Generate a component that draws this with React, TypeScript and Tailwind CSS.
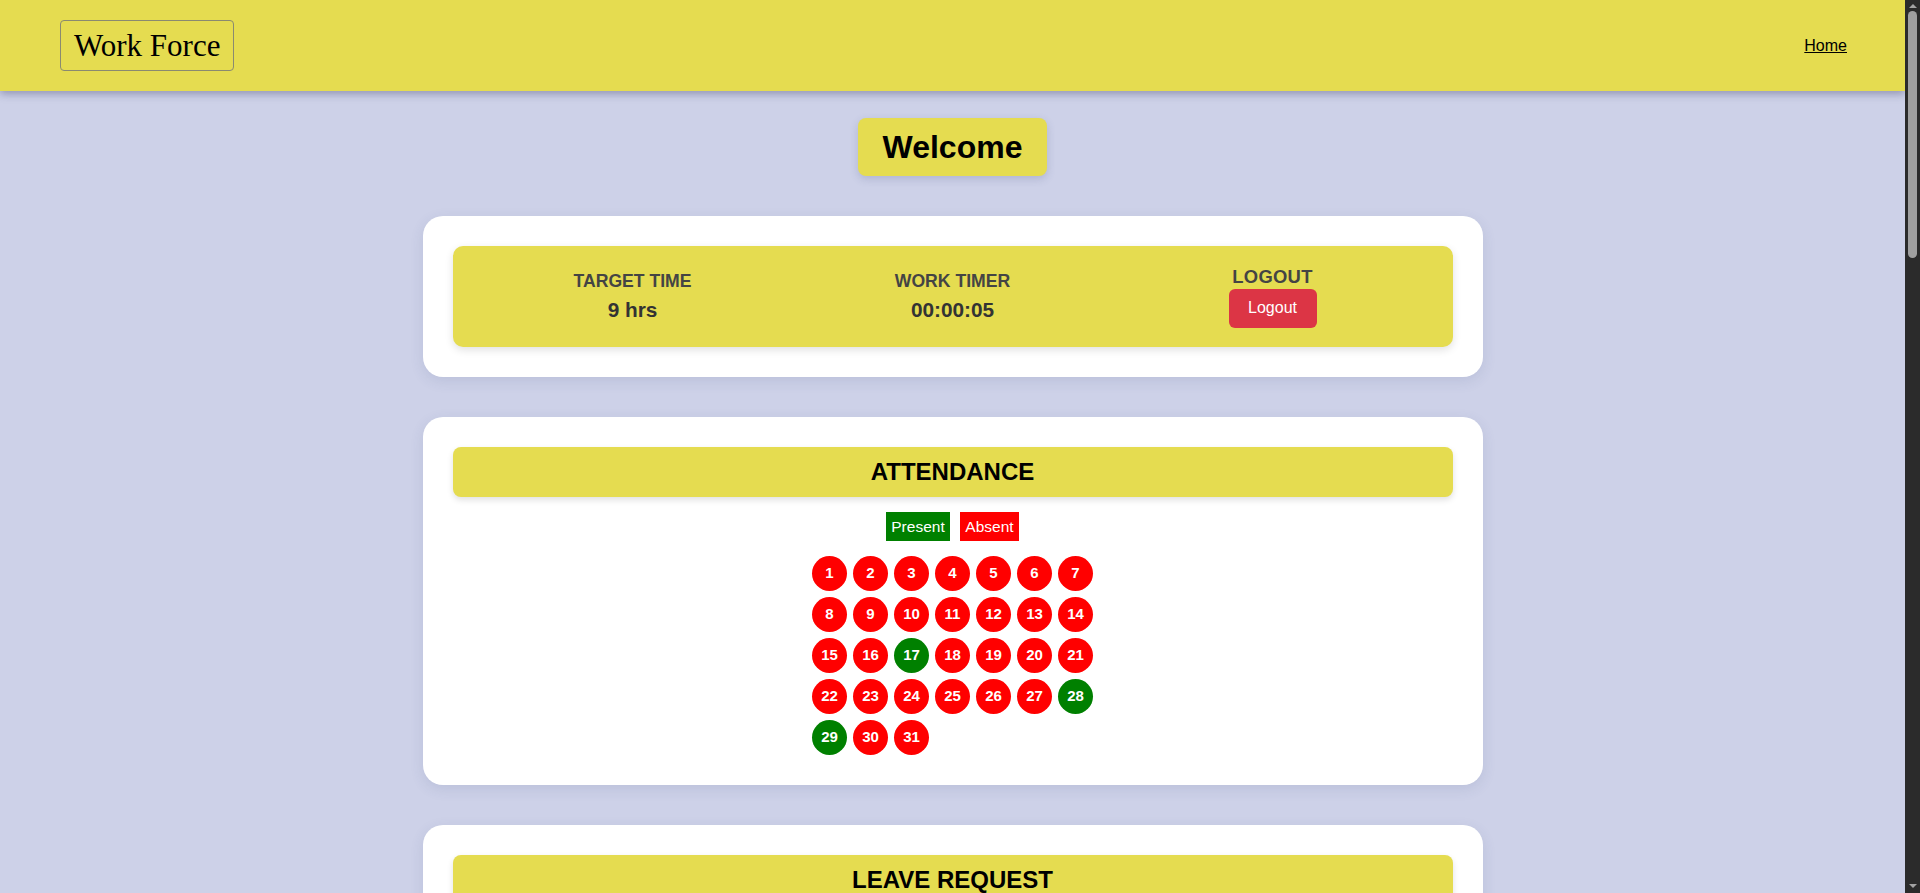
import React from "react";

const present = new Set([17, 28, 29]);

function Card({ children }: { children: React.ReactNode }) {
  return (
    <div className="w-[1060px] bg-white rounded-[20px] p-[30px] shadow-[0_4px_14px_rgba(60,70,120,0.12)]">
      {children}
    </div>
  );
}

function TitleBar({ children }: { children: React.ReactNode }) {
  return (
    <div className="h-[50px] bg-[#e5dc50] rounded-[8px] flex items-center justify-center shadow-[0_3px_6px_rgba(0,0,0,0.12)]">
      <h2 className="text-[24px] font-bold text-black leading-[normal]">{children}</h2>
    </div>
  );
}

function FakeScrollbar() {
  return (
    <div className="w-[15px] shrink-0 h-full bg-[#2b2b2b] flex flex-col items-center">
      <div className="h-[10px] flex items-center justify-center pt-[2px]">
        <div className="w-0 h-0 border-l-[4px] border-r-[4px] border-b-[4px] border-l-transparent border-r-transparent border-b-[#a3a3a3]" />
      </div>
      <div className="w-[9px] h-[247px] mt-[1px] rounded-[5px] bg-[#a0a0a0]" />
      <div className="flex-1" />
      <div className="h-[12px] flex items-center justify-center pb-[3px]">
        <div className="w-0 h-0 border-l-[4px] border-r-[4px] border-t-[4px] border-l-transparent border-r-transparent border-t-[#a3a3a3]" />
      </div>
    </div>
  );
}

export default function App() {
  const days = Array.from({ length: 31 }, (_, i) => i + 1);
  return (
    <div className="h-screen flex overflow-hidden bg-[#cdd1e8]">
      <div className="flex-1 h-full overflow-y-auto [scrollbar-width:none] bg-[#cdd1e8] font-['Liberation_Sans',Arial,sans-serif]">
        <nav className="h-[91px] bg-[#e5dc50] flex items-center justify-between pl-[60px] pr-[58px] shadow-[0_3px_8px_rgba(40,40,80,0.35)] relative z-10">
          <div className="border border-[#8a8a70] rounded-[4px] px-[13px] h-[51px] flex items-center font-['Liberation_Serif','Times_New_Roman',serif] text-[31px] text-black leading-[normal]">
            Work Force
          </div>
          <a href="#" className="text-[16px] text-black underline leading-[normal]">Home</a>
        </nav>

        <main className="flex flex-col items-center pt-[27px] pb-[60px]">
          <div className="bg-[#e5dc50] rounded-[8px] px-[25px] h-[58px] flex items-center shadow-[0_3px_8px_rgba(60,70,120,0.2)]">
            <h1 className="text-[32px] font-bold text-black leading-[normal]">Welcome</h1>
          </div>

          <div className="mt-[40px] flex flex-col gap-[40px]">
            <Card>
              <div className="h-[101px] bg-[#e5dc50] rounded-[10px] flex justify-center items-center shadow-[0_3px_8px_rgba(0,0,0,0.12)]">
                <div className="w-[320px] flex flex-col items-center gap-[6px] leading-[normal]">
                  <div className="text-[17.6px] font-bold text-[#444]">TARGET TIME</div>
                  <div className="text-[20.8px] font-bold text-[#333]">9 hrs</div>
                </div>
                <div className="w-[320px] flex flex-col items-center gap-[6px] leading-[normal]">
                  <div className="text-[17.6px] font-bold text-[#444]">WORK TIMER</div>
                  <div className="text-[20.8px] font-bold text-[#333]">00:00:05</div>
                </div>
                <div className="w-[320px] flex flex-col items-center gap-[1px] leading-[normal]">
                  <div className="text-[18.4px] font-bold text-[#444] tracking-[0.3px]">LOGOUT</div>
                  <button className="bg-[#dc3545] text-white text-[16px] rounded-[6px] w-[88px] h-[39px] flex items-center justify-center">Logout</button>
                </div>
              </div>
            </Card>

            <Card>
              <TitleBar>ATTENDANCE</TitleBar>
              <div className="flex justify-center gap-[10px] mt-[15px] text-[15.5px] text-white leading-[normal]">
                <span className="bg-[#008000] h-[29px] w-[64px] flex items-center justify-center">Present</span>
                <span className="bg-[#ff0000] h-[29px] w-[59px] flex items-center justify-center">Absent</span>
              </div>
              <div className="mt-[15px] flex justify-center">
                <div className="grid grid-cols-[repeat(7,35px)] gap-[6px]">
                  {days.map((d) => (
                    <div
                      key={d}
                      className={`w-[35px] h-[35px] rounded-full flex items-center justify-center text-white font-bold text-[15px] ${present.has(d) ? "bg-[#008000]" : "bg-[#ff0000]"}`}
                    >
                      {d}
                    </div>
                  ))}
                </div>
              </div>
            </Card>

            <Card>
              <TitleBar>LEAVE REQUEST</TitleBar>
              <div className="mt-[20px] flex flex-col gap-[16px] text-[16px] text-[#333]">
                <label className="flex flex-col gap-[6px]">
                  <span className="font-bold">Leave Type</span>
                  <select className="h-[40px] border border-[#ccc] rounded-[6px] px-[10px] bg-white">
                    <option>Sick Leave</option>
                  </select>
                </label>
                <label className="flex flex-col gap-[6px]">
                  <span className="font-bold">From Date</span>
                  <input type="date" className="h-[40px] border border-[#ccc] rounded-[6px] px-[10px]" />
                </label>
                <label className="flex flex-col gap-[6px]">
                  <span className="font-bold">To Date</span>
                  <input type="date" className="h-[40px] border border-[#ccc] rounded-[6px] px-[10px]" />
                </label>
                <label className="flex flex-col gap-[6px]">
                  <span className="font-bold">Reason</span>
                  <textarea className="h-[120px] border border-[#ccc] rounded-[6px] p-[10px]" />
                </label>
                <button className="self-center bg-[#28a745] text-white rounded-[6px] px-[20px] h-[40px]">Submit</button>
              </div>
            </Card>

            <Card>
              <TitleBar>LEAVE HISTORY</TitleBar>
              <div className="h-[600px]" />
            </Card>

            <Card>
              <TitleBar>WORK LOG</TitleBar>
              <div className="h-[700px]" />
            </Card>
          </div>
        </main>
      </div>
      <FakeScrollbar />
    </div>
  );
}
